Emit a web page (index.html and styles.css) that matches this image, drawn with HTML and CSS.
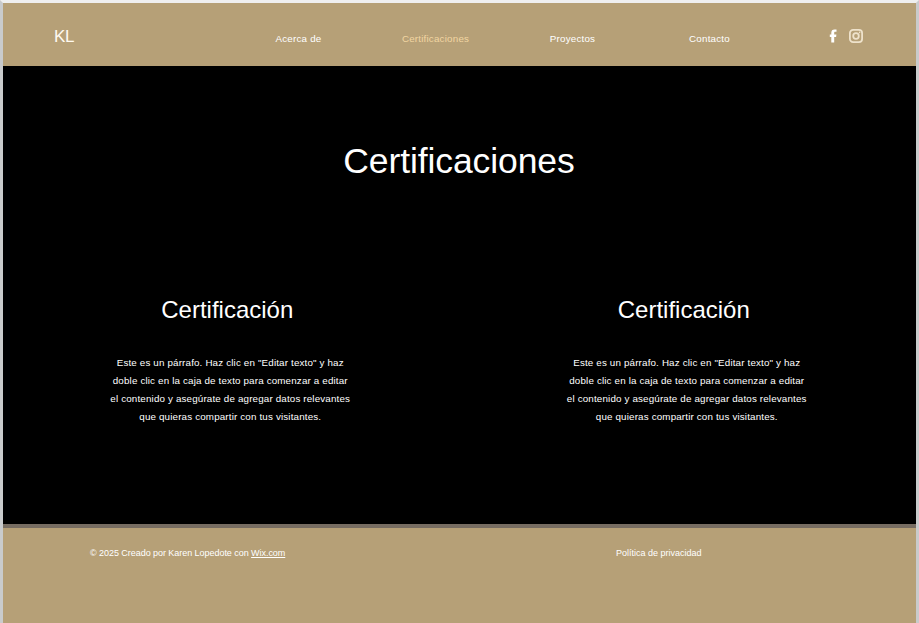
FILE: index.html
```html
<!DOCTYPE html>
<html lang="es">
<head>
<meta charset="utf-8">
<title>Certificaciones</title>
<link rel="stylesheet" href="styles.css">
</head>
<body>
<div class="page">
  <header class="header">
    <a class="logo">KL</a>
    <nav class="nav">
      <a>Acerca de</a>
      <a class="active">Certificaciones</a>
      <a>Proyectos</a>
      <a>Contacto</a>
    </nav>
    <div class="social">
      <svg class="facebook" viewBox="0 0 9 14"><path d="M2.3 13.5V8H.8V5.4h1.5V3.8C2.3 1.5 3.4.4 5.5.4h2v2.4H6.3c-.9 0-1.1.4-1.1 1.2v1.4h2.2L7.1 8H5.2v5.5z"/></svg>
      <svg class="instagram" viewBox="0 0 14 14"><rect x=".9" y=".9" width="12.2" height="12.2" rx="3.2"/><circle cx="7" cy="7" r="2.8"/><circle class="dot" cx="10.6" cy="3.4" r=".8"/></svg>
    </div>
  </header>
  <main class="main">
    <h1>Certificaciones</h1>
    <div class="columns">
      <section class="card">
        <h2>Certificación</h2>
        <p>Este es un párrafo. Haz clic en "Editar texto" y haz<br>doble clic en la caja de texto para comenzar a editar<br>el contenido y asegúrate de agregar datos relevantes<br>que quieras compartir con tus visitantes.</p>
      </section>
      <section class="card">
        <h2>Certificación</h2>
        <p>Este es un párrafo. Haz clic en "Editar texto" y haz<br>doble clic en la caja de texto para comenzar a editar<br>el contenido y asegúrate de agregar datos relevantes<br>que quieras compartir con tus visitantes.</p>
      </section>
    </div>
  </main>
  <footer class="footer">
    <span class="copyright">© 2025 Creado por Karen Lopedote con <a>Wix.com</a></span>
    <span class="privacy">Política de privacidad</span>
  </footer>
</div>
</body>
</html>
```
FILE: styles.css
```css
* { box-sizing: border-box; }
body {
  margin: 0;
  height: 623px;
  overflow: hidden;
  font-family: "Liberation Sans", Arial, sans-serif;
  color: #fff;
}
h1, h2, p { margin: 0; font-weight: 400; }
.page {
  height: 623px;
  display: flex;
  flex-direction: column;
  border: solid #c9cbcc;
  border-width: 3px 3px 0;
  border-top-color: #efefef;
}
.header {
  height: 63px;
  background: #b6a077;
  display: grid;
  grid-template-columns: 227px 548px 1fr;
  align-items: center;
}
.logo {
  padding: 4px 0 0 51px;
  font-size: 17px;
  letter-spacing: -0.3px;
  color: #fffaf0;
}
.nav {
  display: grid;
  grid-template-columns: repeat(4, 137px);
  padding-top: 7px;
  font-size: 9.8px;
  letter-spacing: 0.2px;
  text-align: center;
}
.nav .active { color: #f2d6a2; }
.social {
  display: flex;
  align-items: center;
  padding: 3px 0 0 51px;
  gap: 11px;
}
.facebook { width: 9px; height: 14px; fill: #fff; }
.instagram { width: 14px; height: 14px; fill: none; stroke: #eee2cb; stroke-width: 1.8; }
.instagram .dot { fill: #eee2cb; stroke: none; }
.main {
  height: 462px;
  background: #000;
  border-bottom: 4px solid #776d62;
  text-align: center;
}
h1 {
  padding: 74px 1px 0 0;
  font-size: 35.5px;
  line-height: 42px;
  letter-spacing: -0.1px;
}
.columns {
  display: grid;
  grid-template-columns: 1fr 1fr;
  padding-top: 112px;
}
h2 { padding-right: 8px; font-size: 24px; line-height: 32px; }
.card p {
  margin-top: 28px;
  padding-right: 2px;
  font-size: 9.8px;
  line-height: 18px;
  letter-spacing: 0.16px;
}
.footer {
  flex: 1;
  background: #b6a077;
  display: grid;
  grid-template-columns: 526px 1fr;
  padding: 19px 0 0 87px;
  font-size: 9px;
  line-height: 12px;
}
.copyright { letter-spacing: -0.045px; }
.footer a { text-decoration: underline; }
```
